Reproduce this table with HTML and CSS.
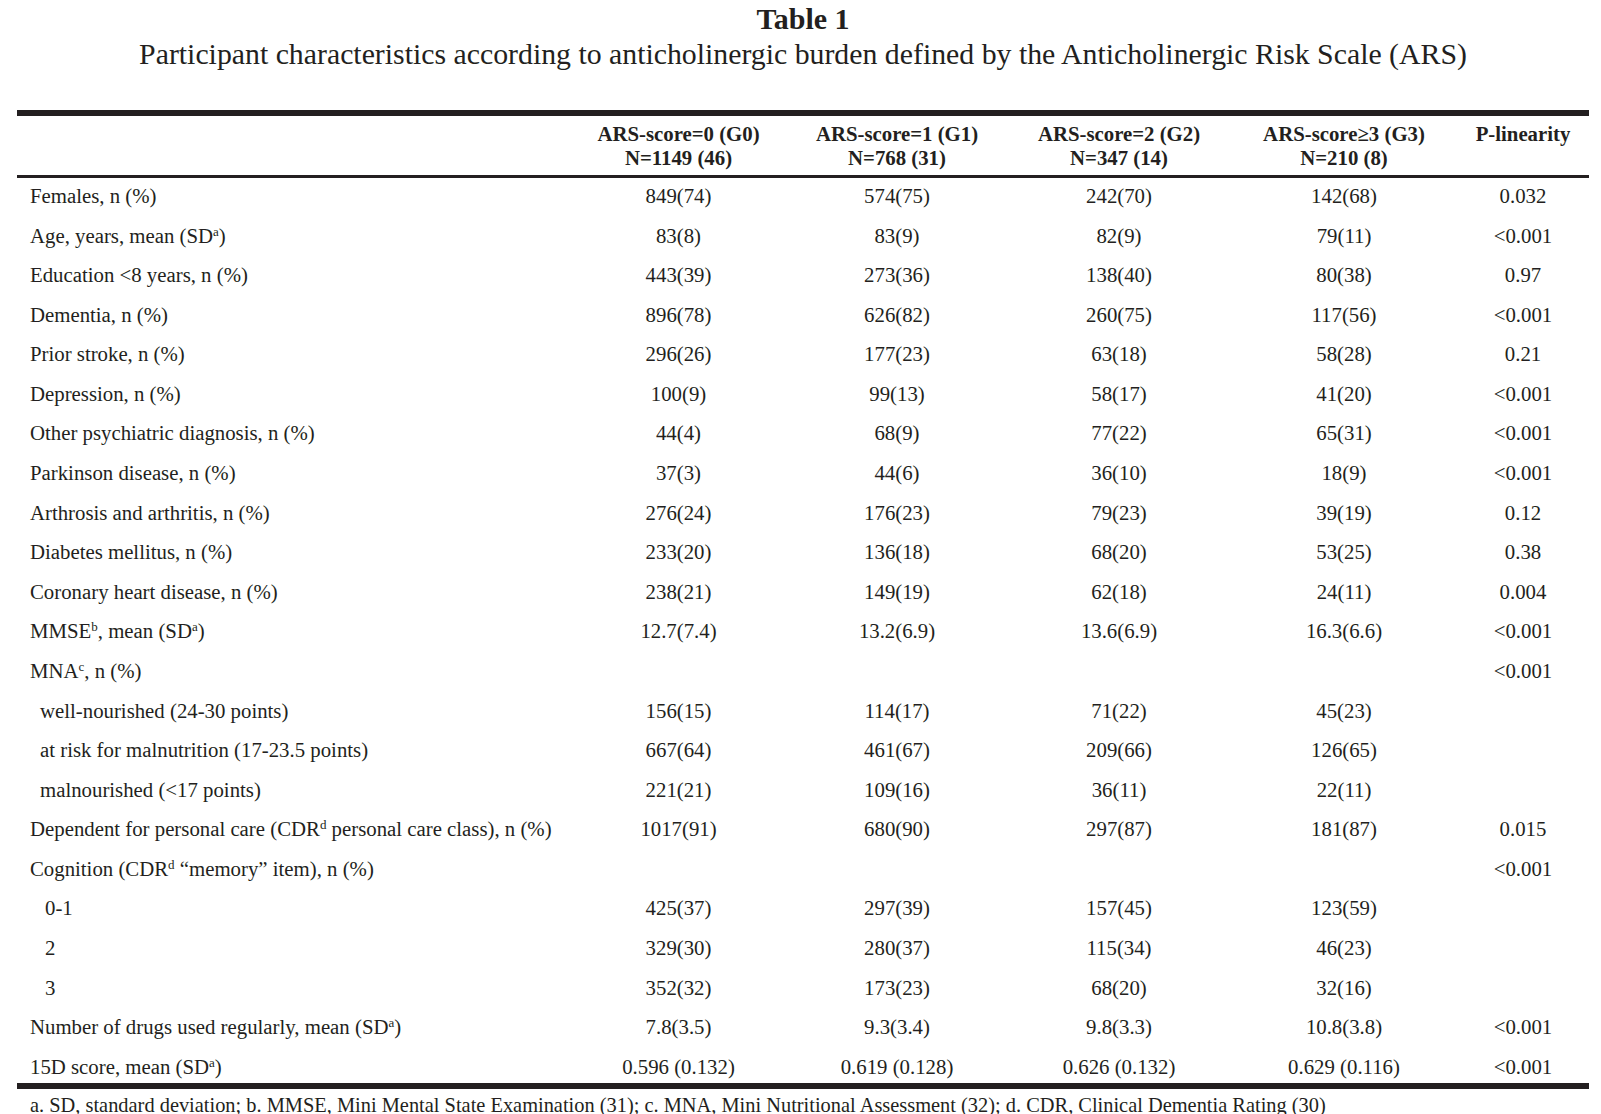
FILE: index.html
```html
<!DOCTYPE html>
<html lang="en">
<head>
<meta charset="utf-8">
<title>Table 1</title>
<link rel="stylesheet" href="styles.css">
</head>
<body>
<div class="page">
  <h1 class="title">Table 1</h1>
  <p class="subtitle">Participant characteristics according to anticholinergic burden defined by the Anticholinergic Risk Scale (ARS)</p>
  <table class="data">
    <colgroup>
      <col class="c-label"><col class="c-g0"><col class="c-g1"><col class="c-g2"><col class="c-g3"><col class="c-p">
    </colgroup>
    <thead>
      <tr>
        <th class="lbl"></th>
        <th>ARS-score=0 (G0)<br>N=1149 (46)</th>
        <th>ARS-score=1 (G1)<br>N=768 (31)</th>
        <th>ARS-score=2 (G2)<br>N=347 (14)</th>
        <th>ARS-score≥3 (G3)<br>N=210 (8)</th>
        <th class="pcol">P-linearity<br>&nbsp;</th>
      </tr>
    </thead>
    <tbody>
      <tr><td class="lbl">Females, n (%)</td><td>849(74)</td><td>574(75)</td><td>242(70)</td><td>142(68)</td><td>0.032</td></tr>
      <tr><td class="lbl">Age, years, mean (SD<sup>a</sup>)</td><td>83(8)</td><td>83(9)</td><td>82(9)</td><td>79(11)</td><td>&lt;0.001</td></tr>
      <tr><td class="lbl">Education &lt;8 years, n (%)</td><td>443(39)</td><td>273(36)</td><td>138(40)</td><td>80(38)</td><td>0.97</td></tr>
      <tr><td class="lbl">Dementia, n (%)</td><td>896(78)</td><td>626(82)</td><td>260(75)</td><td>117(56)</td><td>&lt;0.001</td></tr>
      <tr><td class="lbl">Prior stroke, n (%)</td><td>296(26)</td><td>177(23)</td><td>63(18)</td><td>58(28)</td><td>0.21</td></tr>
      <tr><td class="lbl">Depression, n (%)</td><td>100(9)</td><td>99(13)</td><td>58(17)</td><td>41(20)</td><td>&lt;0.001</td></tr>
      <tr><td class="lbl">Other psychiatric diagnosis, n (%)</td><td>44(4)</td><td>68(9)</td><td>77(22)</td><td>65(31)</td><td>&lt;0.001</td></tr>
      <tr><td class="lbl">Parkinson disease, n (%)</td><td>37(3)</td><td>44(6)</td><td>36(10)</td><td>18(9)</td><td>&lt;0.001</td></tr>
      <tr><td class="lbl">Arthrosis and arthritis, n (%)</td><td>276(24)</td><td>176(23)</td><td>79(23)</td><td>39(19)</td><td>0.12</td></tr>
      <tr><td class="lbl">Diabetes mellitus, n (%)</td><td>233(20)</td><td>136(18)</td><td>68(20)</td><td>53(25)</td><td>0.38</td></tr>
      <tr><td class="lbl">Coronary heart disease, n (%)</td><td>238(21)</td><td>149(19)</td><td>62(18)</td><td>24(11)</td><td>0.004</td></tr>
      <tr><td class="lbl">MMSE<sup>b</sup>, mean (SD<sup>a</sup>)</td><td>12.7(7.4)</td><td>13.2(6.9)</td><td>13.6(6.9)</td><td>16.3(6.6)</td><td>&lt;0.001</td></tr>
      <tr><td class="lbl">MNA<sup>c</sup>, n (%)</td><td></td><td></td><td></td><td></td><td>&lt;0.001</td></tr>
      <tr><td class="lbl sub">well-nourished (24-30 points)</td><td>156(15)</td><td>114(17)</td><td>71(22)</td><td>45(23)</td><td></td></tr>
      <tr><td class="lbl sub">at risk for malnutrition (17-23.5 points)</td><td>667(64)</td><td>461(67)</td><td>209(66)</td><td>126(65)</td><td></td></tr>
      <tr><td class="lbl sub">malnourished (&lt;17 points)</td><td>221(21)</td><td>109(16)</td><td>36(11)</td><td>22(11)</td><td></td></tr>
      <tr><td class="lbl">Dependent for personal care (CDR<sup>d</sup> personal care class), n (%)</td><td>1017(91)</td><td>680(90)</td><td>297(87)</td><td>181(87)</td><td>0.015</td></tr>
      <tr><td class="lbl">Cognition (CDR<sup>d</sup> “memory” item), n (%)</td><td></td><td></td><td></td><td></td><td>&lt;0.001</td></tr>
      <tr><td class="lbl sub2">0-1</td><td>425(37)</td><td>297(39)</td><td>157(45)</td><td>123(59)</td><td></td></tr>
      <tr><td class="lbl sub2">2</td><td>329(30)</td><td>280(37)</td><td>115(34)</td><td>46(23)</td><td></td></tr>
      <tr><td class="lbl sub2">3</td><td>352(32)</td><td>173(23)</td><td>68(20)</td><td>32(16)</td><td></td></tr>
      <tr><td class="lbl">Number of drugs used regularly, mean (SD<sup>a</sup>)</td><td>7.8(3.5)</td><td>9.3(3.4)</td><td>9.8(3.3)</td><td>10.8(3.8)</td><td>&lt;0.001</td></tr>
      <tr class="last"><td class="lbl">15D score, mean (SD<sup>a</sup>)</td><td>0.596 (0.132)</td><td>0.619 (0.128)</td><td>0.626 (0.132)</td><td>0.629 (0.116)</td><td>&lt;0.001</td></tr>
    </tbody>
  </table>
  <p class="foot">a. SD, standard deviation; b. MMSE, Mini Mental State Examination (31); c. MNA, Mini Nutritional Assessment (32); d. CDR, Clinical Dementia Rating (30)</p>
</div>
</body>
</html>
```

FILE: styles.css
```css
html, body {
  margin: 0;
  padding: 0;
  background: #ffffff;
}

body {
  font-family: "Liberation Serif", "Times New Roman", serif;
  color: #231f20;
}

.page {
  width: 1572px;
  margin-left: 17px;
  padding-top: 3px;
}

.title {
  margin: 0;
  font-size: 30px;
  line-height: 32px;
  font-weight: bold;
  text-align: center;
}

.subtitle {
  margin: 3px 0 0;
  font-size: 29.8px;
  line-height: 32px;
  text-align: center;
  white-space: nowrap;
}

.data {
  margin-top: 40px;
  width: 1572px;
  border-collapse: separate;
  border-spacing: 0;
  table-layout: fixed;
  border-top: 6px solid #231f20;
  border-bottom: 6px solid #231f20;
  font-size: 20.8px;
}

.c-label { width: 553px; }
.c-g0 { width: 217px; }
.c-g1 { width: 220px; }
.c-g2 { width: 224px; }
.c-g3 { width: 226px; }
.c-p { width: 132px; }

.data th {
  font-weight: bold;
  text-align: center;
  line-height: 24px;
  padding: 6px 0 5px;
  border-bottom: 3px solid #231f20;
  white-space: nowrap;
}

.data tbody tr {
  height: 39.59px;
}

.data tbody tr.last {
  height: 34px;
}

.data td {
  text-align: center;
  padding: 6px 0 0;
  line-height: 24px;
  white-space: nowrap;
  vertical-align: top;
}

.data td.lbl {
  text-align: left;
  padding-left: 13px;
}

.data td.sub {
  padding-left: 23px;
}

.data td.sub2 {
  padding-left: 28px;
}

sup {
  font-size: 13px;
  line-height: 0;
  vertical-align: 7px;
}

.foot {
  margin: 4px 0 0;
  padding-left: 13px;
  font-size: 20.4px;
  line-height: 24px;
  white-space: nowrap;
}
```
